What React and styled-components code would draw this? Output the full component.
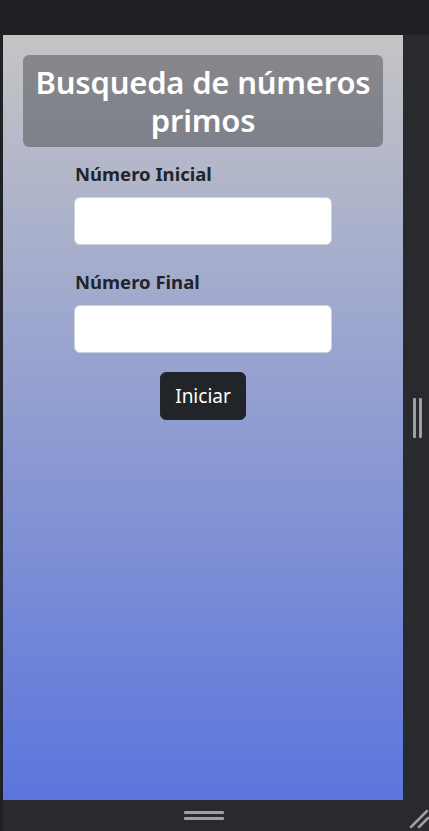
import styled, { createGlobalStyle } from "styled-components";

const GlobalStyle = createGlobalStyle`
  html, body {
    margin: 0;
    padding: 0;
    background: #202124;
  }
  * {
    box-sizing: border-box;
  }
`;

export default function App() {
  return (
    <>
      <GlobalStyle />
      <Frame>
        <TopBar />
        <Middle>
          <LeftEdge />
          <Viewport>
            <TitleBox>Busqueda de números primos</TitleBox>
            <Form onSubmit={e => e.preventDefault()}>
              <Label htmlFor="inicial">Número Inicial</Label>
              <Input id="inicial" type="number" />
              <Label htmlFor="final">Número Final</Label>
              <Input id="final" type="number" />
              <ButtonRow>
                <StartButton type="submit">Iniciar</StartButton>
              </ButtonRow>
            </Form>
          </Viewport>
          <RightRail>
            <VerticalGrip>
              <span />
              <span />
            </VerticalGrip>
          </RightRail>
        </Middle>
        <BottomBar>
          <LeftEdge />
          <BottomRail>
            <HorizontalGrip>
              <span />
              <span />
            </HorizontalGrip>
            <CornerGrip viewBox="0 0 20 20">
              <line x1="2" y1="18" x2="18" y2="2" />
              <line x1="10" y1="18" x2="19" y2="9" />
            </CornerGrip>
          </BottomRail>
        </BottomBar>
      </Frame>
    </>
  );
}

const Frame = styled.div`
  width: 429px;
  height: 831px;
  display: flex;
  flex-direction: column;
  font-family: "Noto Sans", "Open Sans", sans-serif;
`;

const TopBar = styled.div`
  height: 35px;
  background: #202124;
`;

const Middle = styled.div`
  display: flex;
  height: 765px;
`;

const LeftEdge = styled.div`
  width: 3px;
  background: #202124;
`;

const Viewport = styled.div`
  width: 400px;
  height: 100%;
  background: linear-gradient(to bottom, #c5c5c5, #5b75dd);
  padding: 20px 20px 0;
`;

const TitleBox = styled.h1`
  margin: 0;
  padding: 8px 0;
  background: rgba(0, 0, 0, 0.3);
  border-radius: 6px;
  color: #fff;
  text-align: center;
  font-size: 31px;
  font-weight: 600;
  letter-spacing: -0.2px;
  line-height: 38px;
`;

const Form = styled.form`
  width: 258px;
  margin: 0 auto;
  padding-top: 13px;
  display: flex;
  flex-direction: column;
`;

const Label = styled.label`
  color: #212529;
  font-size: 18.5px;
  font-weight: 700;
  line-height: 27px;
  margin: 0 0 10px 1px;

  & ~ & {
    margin-top: 23px;
  }
`;

const Input = styled.input`
  width: 100%;
  height: 48px;
  padding: 8px 16px;
  font-size: 20px;
  background: #fff;
  border: 1px solid #ced4da;
  border-radius: 6px;
  outline: none;
`;

const ButtonRow = styled.div`
  display: flex;
  justify-content: center;
  margin-top: 19px;
`;

const StartButton = styled.button`
  height: 48px;
  padding: 0 14px;
  background: #212529;
  color: #fff;
  border: 1px solid #212529;
  border-radius: 6px;
  font-family: inherit;
  font-size: 19px;
  cursor: pointer;
`;

const RightRail = styled.div`
  flex: 1;
  background: #292a2d;
  display: flex;
  align-items: center;
  justify-content: center;
`;

const VerticalGrip = styled.div`
  display: flex;
  gap: 3px;
  margin-left: 2px;

  span {
    width: 3px;
    height: 40px;
    background: #a0a0a2;
    border-radius: 1px;
  }
`;

const BottomBar = styled.div`
  flex: 1;
  display: flex;
`;

const BottomRail = styled.div`
  flex: 1;
  background: #292a2d;
  position: relative;
  display: flex;
  align-items: center;
  justify-content: center;
  padding-right: 26px;
`;

const HorizontalGrip = styled.div`
  display: flex;
  flex-direction: column;
  gap: 3px;
  margin-left: 2px;

  span {
    width: 40px;
    height: 3px;
    background: #a0a0a2;
    border-radius: 1px;
  }
`;

const CornerGrip = styled.svg`
  position: absolute;
  right: 0;
  bottom: 2px;
  width: 20px;
  height: 20px;

  line {
    stroke: #a0a0a2;
    stroke-width: 2.5;
    stroke-linecap: round;
  }
`;
